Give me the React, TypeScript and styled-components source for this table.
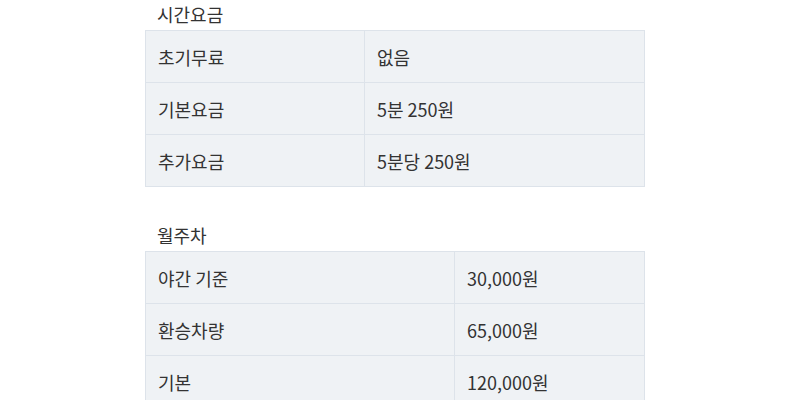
import React from 'react'
import styled, { createGlobalStyle } from 'styled-components'

const GlobalStyle = createGlobalStyle`
  body {
    margin: 0;
    background: #ffffff;
    font-family: "Noto Sans CJK KR", "Noto Sans", sans-serif;
    color: #333333;
  }
`

const Page = styled.div`
  width: 500px;
  margin-left: 145px;
  padding-top: 2px;
  display: flex;
  flex-direction: column;
  gap: 36px;
`

const Section = styled.section`
  display: flex;
  flex-direction: column;
`

const Title = styled.h3`
  margin: 0 0 4px;
  padding-left: 12px;
  font-size: 18px;
  font-weight: 400;
  line-height: 24px;
  color: #333333;
`

const Table = styled.table`
  width: 500px;
  border-collapse: collapse;
  table-layout: fixed;
`

const Cell = styled.td<{ $w?: number }>`
  width: ${(p) => (p.$w ? `${p.$w}px` : 'auto')};
  height: 52px;
  padding: 0 12px;
  box-sizing: border-box;
  background: #eff2f5;
  border: 1px solid #dde3ea;
  font-size: 18px;
  line-height: 24px;
  color: #333333;
`

type Row = [string, string]

const hourly: Row[] = [
  ['초기무료', '없음'],
  ['기본요금', '5분 250원'],
  ['추가요금', '5분당 250원'],
]

const monthly: Row[] = [
  ['야간 기준', '30,000원'],
  ['환승차량', '65,000원'],
  ['기본', '120,000원'],
]

const FeeTable = ({ title, rows, split }: { title: string; rows: Row[]; split: number }) => (
  <Section>
    <Title>{title}</Title>
    <Table>
      <tbody>
        {rows.map((r) => (
          <tr key={r[0]}>
            <Cell $w={split}>{r[0]}</Cell>
            <Cell>{r[1]}</Cell>
          </tr>
        ))}
      </tbody>
    </Table>
  </Section>
)

const App: React.FC = () => {
  return (
    <>
      <GlobalStyle />
      <Page>
        <FeeTable title="시간요금" rows={hourly} split={219} />
        <FeeTable title="월주차" rows={monthly} split={309} />
      </Page>
    </>
  )
}

export default App
